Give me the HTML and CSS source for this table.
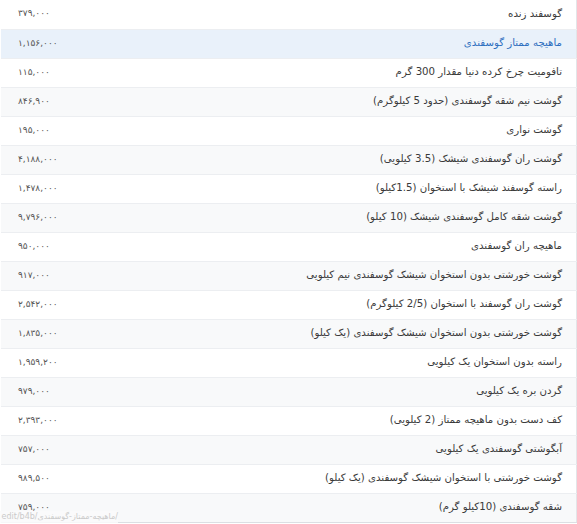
FILE: index.html
```html
<!DOCTYPE html>
<html lang="fa" dir="rtl">
<head>
<meta charset="utf-8">
<link rel="stylesheet" href="styles.css">
</head>
<body>
<table class="prices">
<tbody>
<tr><td class="name">گوسفند زنده</td><td class="price">۳۷۹,۰۰۰</td></tr>
<tr class="hover"><td class="name">ماهیچه ممتاز گوسفندی</td><td class="price">۱,۱۵۶,۰۰۰</td></tr>
<tr><td class="name">تافومیت چرخ کرده دنیا مقدار 300 گرم</td><td class="price">۱۱۵,۰۰۰</td></tr>
<tr><td class="name">گوشت نیم شقه گوسفندی (حدود 5 کیلوگرم)</td><td class="price">۸۴۶,۹۰۰</td></tr>
<tr><td class="name">گوشت نواری</td><td class="price">۱۹۵,۰۰۰</td></tr>
<tr><td class="name">گوشت ران گوسفندی شیشک (3.5 کیلویی)</td><td class="price">۴,۱۸۸,۰۰۰</td></tr>
<tr><td class="name">راسته گوسفند شیشک با استخوان (1.5کیلو)</td><td class="price">۱,۴۷۸,۰۰۰</td></tr>
<tr><td class="name">گوشت شقه کامل گوسفندی شیشک (10 کیلو)</td><td class="price">۹,۷۹۶,۰۰۰</td></tr>
<tr><td class="name">ماهیچه ران گوسفندی</td><td class="price">۹۵۰,۰۰۰</td></tr>
<tr><td class="name">گوشت خورشتی بدون استخوان شیشک گوسفندی نیم کیلویی</td><td class="price">۹۱۷,۰۰۰</td></tr>
<tr><td class="name">گوشت ران گوسفند با استخوان (2/5 کیلوگرم)</td><td class="price">۲,۵۴۲,۰۰۰</td></tr>
<tr><td class="name">گوشت خورشتی بدون استخوان شیشک گوسفندی (یک کیلو)</td><td class="price">۱,۸۳۵,۰۰۰</td></tr>
<tr><td class="name">راسته بدون استخوان یک کیلویی</td><td class="price">۱,۹۵۹,۲۰۰</td></tr>
<tr><td class="name">گردن بره یک کیلویی</td><td class="price">۹۷۹,۰۰۰</td></tr>
<tr><td class="name">کف دست بدون ماهیچه ممتاز (2 کیلویی)</td><td class="price">۲,۳۹۳,۰۰۰</td></tr>
<tr><td class="name">آبگوشتی گوسفندی یک کیلویی</td><td class="price">۷۵۷,۰۰۰</td></tr>
<tr><td class="name">گوشت خورشتی با استخوان شیشک گوسفندی (یک کیلو)</td><td class="price">۹۸۹,۵۰۰</td></tr>
<tr><td class="name">شقه گوسفندی (10کیلو گرم)</td><td class="price">۷۵۹,۰۰۰</td></tr>
</tbody>
</table>
<div class="status" dir="ltr">edit/b4b/ماهیچه-ممتاز-گوسفندی/</div>
</body>
</html>
```

FILE: styles.css
```css
html, body {
  margin: 0;
  padding: 0;
  background: #ffffff;
}
body {
  font-family: "DejaVu Sans", "Noto Sans", sans-serif;
  color: #333333;
  overflow: hidden;
  width: 577px;
  height: 524px;
  position: relative;
}
.prices {
  width: 576px;
  border-collapse: collapse;
  border-right: 1px solid #e3e5e8;
  border-bottom: 1px solid #dcdfe3;
}
.prices tr {
  height: 29px;
  border-top: 1px solid #eceef1;
}
.prices tr:first-child {
  border-top: none;
}
.prices tr:nth-child(even) {
  background: #f8f9fa;
}
.prices tr.hover {
  background: #e9f1fa;
}
.prices td {
  padding: 0;
  vertical-align: middle;
  white-space: nowrap;
}
.name {
  text-align: right;
  padding-right: 14px !important;
  padding-bottom: 2px !important;
  font-size: 10.2px;
  color: #3a3a3a;
}
.hover .name {
  color: #2f6fbf;
}
.price {
  text-align: left;
  padding-left: 17px !important;
  padding-bottom: 2px !important;
  font-size: 9px;
  color: #555555;
  width: 150px;
}
.status {
  position: absolute;
  left: 0;
  top: 511px;
  height: 12px;
  width: 118px;
  background: rgba(250, 250, 250, 0.85);
  color: #cacaca;
  font-size: 8px;
  line-height: 12px;
  white-space: nowrap;
  text-align: right;
}
```
